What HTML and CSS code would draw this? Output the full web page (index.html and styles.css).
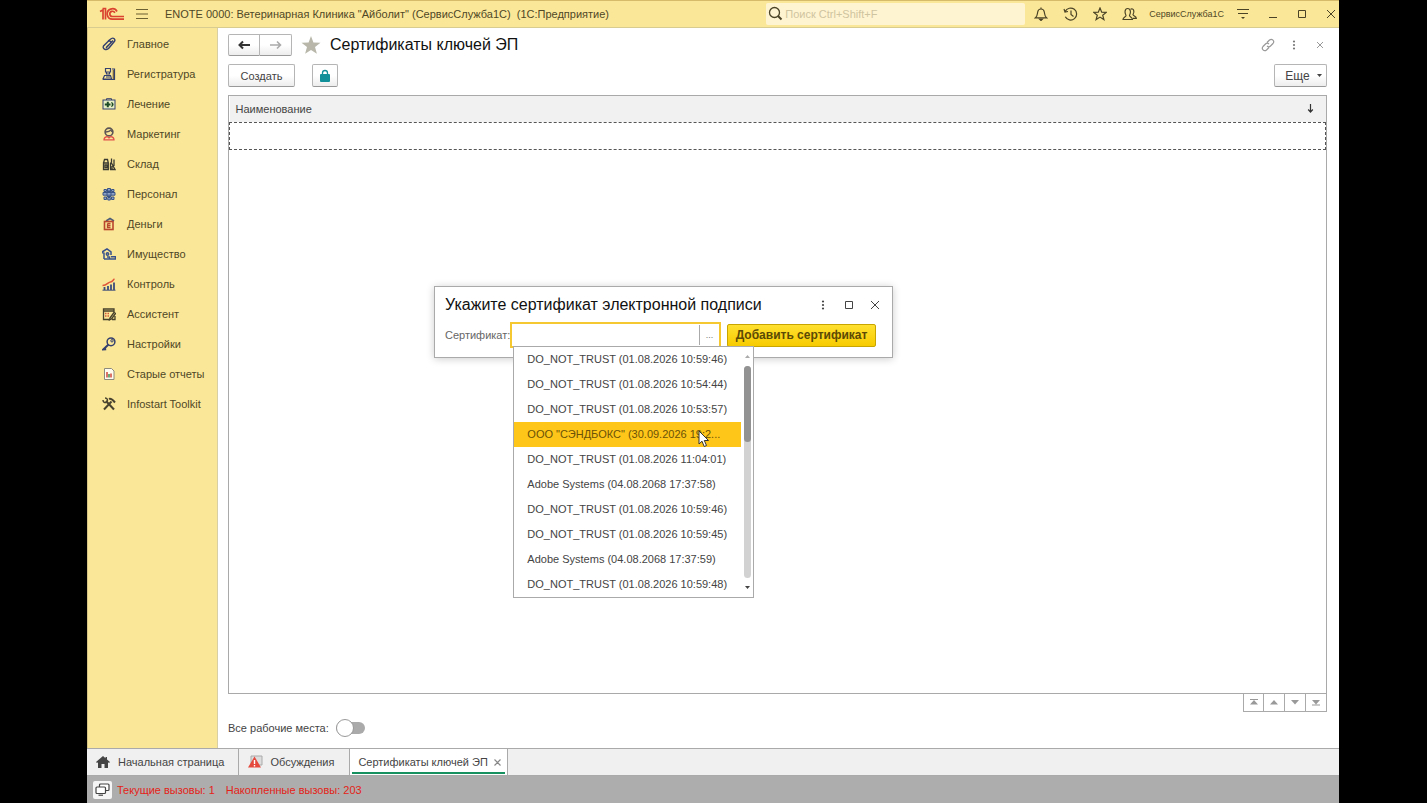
FILE: index.html
```html
<!DOCTYPE html>
<html lang="ru">
<head>
<meta charset="utf-8">
<title>Сертификаты ключей ЭП</title>
<link rel="stylesheet" href="styles.css">
</head>
<body>
<div class="app">
  <header class="titlebar">
    <svg class="logo" width="26" height="14" viewBox="0 0 26 14" fill="none" stroke="#d9432f" stroke-width="1.700"><path d="M1 4.500 4 3V12.500M3.500 1.500H6.500V12.500"/><path d="M18 4.500A5.200 5.200 0 1 0 13.500 12.200H25"/><path d="M15.800 5.800A2.600 2.600 0 1 0 13.500 9.500H25"/></svg>
    <button class="icon-btn menu-btn" aria-label="Меню"><svg width="14" height="12" viewBox="0 0 14 12" stroke="#6b6132" stroke-width="1.200"><path d="M1 1.500H13M1 6H13M1 10.500H13"/></svg></button>
    <span class="app-title">ENOTE 0000: Ветеринарная Клиника "Айболит" (СервисСлужба1С)&nbsp; (1С:Предприятие)</span>
    <label class="search">
      <svg width="15" height="15" viewBox="0 0 15 15" fill="none" stroke="#4a4326" stroke-width="1.300"><circle cx="6.500" cy="6.500" r="5"/><path d="m10 10 3.500 3.500" stroke-width="2"/></svg>
      <input type="search" placeholder="Поиск Ctrl+Shift+F" aria-label="Поиск">
    </label>
    <div class="tools">
      <button class="icon-btn" aria-label="Уведомления"><svg width="14" height="14" viewBox="0 0 14 14" fill="none" stroke="#4a4326" stroke-width="1.200"><path d="M1.500 10.800C3.500 9 3.300 7 3.700 5 4 3 5.500 2 7 2S10 3 10.300 5C10.700 7 10.500 9 12.500 10.800ZM7 .5V2"/><path d="M5.500 12h3L7 13.500Z" fill="#4a4326"/></svg></button>
      <button class="icon-btn" aria-label="История"><svg width="15" height="14" viewBox="0 0 15 14" fill="none" stroke="#4a4326" stroke-width="1.200"><path d="M2.200 4.500A6 6 0 1 1 2.300 9.800M1 2l1 3 3-.5M8 3.500V7.500L10.500 9.500"/></svg></button>
      <button class="icon-btn" aria-label="Избранное"><svg width="14" height="14" viewBox="0 0 14 14" fill="none" stroke="#4a4326" stroke-width="1.200"><path d="m7 1 1.700 4.200 4.500.2-3.500 2.800 1.200 4.400L7 10.100 3.100 12.600l1.200-4.400L.8 5.400l4.500-.2Z"/></svg></button>
      <button class="icon-btn" aria-label="Пользователи"><svg width="15" height="14" viewBox="0 0 15 14" fill="none" stroke="#4a4326" stroke-width="1.200"><path d="M1 12.500C1 10 4 10 4 8.500 2.500 6 2.500 1.500 5.700 1.500S9 6 7.500 8.500C7.500 10 10.500 10 10.500 12.500Z"/><path d="M8.500 2.200C11.500 .8 13 4.500 11 7.500 11 9 14.300 9 14.300 11.300H11"/></svg></button>
      <span class="user">СервисСлужба1С</span>
      <button class="icon-btn" aria-label="Настройка"><svg width="14" height="13" viewBox="0 0 14 13" fill="none" stroke="#4a4326" stroke-width="1.200"><path d="M1 2.500H13M2 6.500H12"/><path d="M5 10h4l-2 2Z" fill="#4a4326" stroke="none"/></svg></button>
      <div class="window-btns">
        <button class="icon-btn" aria-label="Свернуть"><svg width="10" height="10" viewBox="0 0 10 10" stroke="#4a4326"><path d="M1 8.500H9"/></svg></button>
        <button class="icon-btn" aria-label="Развернуть"><svg width="10" height="10" viewBox="0 0 10 10" fill="none" stroke="#4a4326"><path d="M1.500 1.500h7v7h-7Z"/></svg></button>
        <button class="icon-btn" aria-label="Закрыть"><svg width="10" height="10" viewBox="0 0 10 10" stroke="#4a4326"><path d="M1 1 9 9M9 1 1 9"/></svg></button>
      </div>
    </div>
  </header>

  <div class="body">
    <nav class="sidebar">
      <a href="#"><svg width="14" height="14" viewBox="0 0 14 14" fill="none" stroke="#34406e" stroke-width="1.400"><path d="M6 4 9.500 1.500c2-1.200 4.200 1 3 2.800L7 11c-2.500 3-7 1-5.500-2L6 4.500c2-1.500 3.500.5 2.500 1.800L4.500 10M4 11 11 3.500"/></svg>Главное</a>
      <a href="#"><svg width="14" height="14" viewBox="0 0 14 14" fill="none" stroke="#34406e" stroke-width="1.200"><path d="M3.500 1.500h5v3.500h-5ZM4.500 5v2h3V5M2.500 8.500h6L9.500 12H1ZM4 10h4M10 2h2.500v10.500H1"/><path d="M11.300 3v9" stroke="#6b5a3a"/></svg>Регистратура</a>
      <a href="#"><svg width="14" height="14" viewBox="0 0 14 14"><path d="M4.500 3V1.700h5V3" fill="none" stroke="#34406e"/><rect x="1" y="3" width="12" height="9" fill="#e9efc4" stroke="#34406e"/><path d="M2.800 6.500h2V4.800h2v1.700h1.700v2H6.800v1.700h-2V8.500h-2ZM9 5c3.500.5 3.500 4.500 0 5 1-1.500 1-3.500 0-5Z" fill="#1d4b25"/></svg>Лечение</a>
      <a href="#"><svg width="14" height="14" viewBox="0 0 14 14" fill="none" stroke-width="1.300"><circle cx="7" cy="5" r="3.900" stroke="#5b5555" stroke-width="1.600"/><path d="M4 5c2-.2 4-1 5-2l1 2" stroke="#5b5555"/><path d="M2 12.800C2 10 4 9.800 5.200 9.500L7 11l1.800-1.500c1.200.3 3.200.5 3.200 3.300Z" stroke="#e0534b"/></svg>Маркетинг</a>
      <a href="#"><svg width="14" height="14" viewBox="0 0 14 14" fill="none" stroke="#3a3a30" stroke-width="1.300"><path d="M1.500 6h4.800v6.500H1.500ZM1.500 6l1-3.500h3l.8 3.500M3 8h2v2.500H3ZM8.500 12.500V6.500l1-1.500V1.500M9.500 6l3.500 6.500H8M12 2.500V9M10 9v3"/></svg>Склад</a>
      <a href="#"><svg width="14" height="14" viewBox="0 0 14 14" fill="#8fa5c8" stroke="#3a5486"><path d="M5.500 1.500h3v2.500h-3ZM2 2.500h2.500v2H2ZM9.500 2.500H12v2H9.500ZM1 5.500h12v2.700H1ZM5 4.500h4v5H5ZM2 10h2.500v2.500H2ZM5.800 10.500h2.500V13H5.800ZM9.500 10H12v2.500H9.500Z"/></svg>Персонал</a>
      <a href="#"><svg width="14" height="14" viewBox="0 0 14 14" fill="none"><path d="m4 4 4-2.500L12 4" stroke="#4d5c77" stroke-width="1.500"/><rect x="2.500" y="4.500" width="8.500" height="8" stroke="#b8452d" stroke-width="1.600"/><path d="M5.500 6.500v4h3M5.500 8.500h3M5.500 6.500h3" stroke="#b8452d" stroke-width="1.300"/></svg>Деньги</a>
      <a href="#"><svg width="14" height="14" viewBox="0 0 14 14" fill="none" stroke="#39518a" stroke-width="1.500"><path d="M.8 6.500V4.500L5 1.800l4 3V8M2 5.500V12M2 12h11.500V9.800H9"/><circle cx="5.500" cy="7" r="1.200"/><path d="M5 10h2.500V12"/></svg>Имущество</a>
      <a href="#"><svg width="14" height="14" viewBox="0 0 14 14" fill="none"><path d="M2.500 13V10M6 13V9M9 13V7.500M12 13V5.500" stroke="#3d4d7c" stroke-width="1.800"/><path d="M.5 8.500C5 8.500 6 5 8.500 5S11 2.500 12.500 2" stroke="#e0563a" stroke-width="1.500"/><path d="M.5 13.200h13" stroke="#3d4d7c"/></svg>Контроль</a>
      <a href="#"><svg width="14" height="14" viewBox="0 0 14 14" fill="none" stroke="#45402b" stroke-width="1.300"><path d="M12 5V2H1.500v10.500H8M1.500 4H12"/><path d="M3 6.500h1.500M5.500 6.500H7M3 9h1.500M5.500 9H7" stroke="#d45a3a"/><path d="m8 11 4-5.500 1.500 1L9.500 12 7.500 12.800ZM10 12.500h3V9"/></svg>Ассистент</a>
      <a href="#"><svg width="14" height="14" viewBox="0 0 14 14" fill="none" stroke="#34406e"><path d="M6.500 7.500 1.200 12.500l3-.3" stroke-width="2"/><circle cx="9" cy="4.800" r="3.900" stroke-width="1.500"/><circle cx="10" cy="3.800" r="1.200"/></svg>Настройки</a>
      <a href="#"><svg width="14" height="14" viewBox="0 0 14 14"><path d="M2.500 1.500h7l2.500 2.500v8.500H2.500Z" fill="#fffdf0" stroke="#8b8a7c"/><path d="M5 5v5.500" stroke="#d0453a" stroke-width="1.500"/><path d="M7 7v3.500" stroke="#3a8c4e" stroke-width="1.500"/><path d="M9 6.500v4" stroke="#d0453a" stroke-width="1.500"/></svg>Старые отчеты</a>
      <a href="#"><svg width="14" height="14" viewBox="0 0 14 14" fill="none" stroke="#48432f"><path d="m4 4 8 8.500" stroke-width="2"/><path d="M1 3c0 2.500 2 3 3.500 2.300M3 1c2.500 0 3 2 2 3.500" stroke-width="1.500"/><path d="m2 12.500 7.500-8" stroke-width="2"/><path d="M7 2c2-1 3.500.5 6 3.500" stroke-width="2"/></svg>Infostart Toolkit</a>
    </nav>

    <main class="workspace">
      <div class="page-head">
        <div class="nav-btns">
          <button class="btn" aria-label="Назад"><svg width="14" height="10" viewBox="0 0 14 10" fill="none" stroke="#333" stroke-width="2"><path d="M13 5H3M6 1.500 2.500 5 6 8.500"/></svg></button>
          <button class="btn" aria-label="Вперед"><svg width="14" height="10" viewBox="0 0 14 10" fill="none" stroke="#aaa" stroke-width="1.600"><path d="M1 5h10.500M8 1.500 11.500 5 8 8.500"/></svg></button>
        </div>
        <svg class="star" width="20" height="18" viewBox="0 0 20 18" fill="#b8b7aa"><path d="m10 0 2.400 6.400 7.100.3-5.500 4.300 1.900 6.800L10 13.900 4.100 17.800 6 11 .5 6.700l7.100-.3Z"/></svg>
        <h1>Сертификаты ключей ЭП</h1>
        <div class="page-tools">
          <button class="icon-btn" aria-label="Ссылка"><svg width="14" height="14" viewBox="0 0 14 14" fill="none" stroke="#999" stroke-width="1.200"><path d="M6 4.500 8.500 2C11 0 14 3 12 5.500L9.500 8C8.500 9 7 8.800 6 8M8 9.500 5.500 12C3 14 0 11 2 8.500L4.500 6C5.500 5 7 5.200 8 6"/></svg></button>
          <button class="icon-btn" aria-label="Действия"><svg width="4" height="10" viewBox="0 0 4 10" fill="#777"><circle cx="2" cy="1.500" r="1.100"/><circle cx="2" cy="5" r="1.100"/><circle cx="2" cy="8.500" r="1.100"/></svg></button>
          <button class="icon-btn" aria-label="Закрыть страницу"><svg width="6" height="6" viewBox="0 0 6 6" stroke="#999"><path d="m0 0 6 6M6 0 0 6"/></svg></button>
        </div>
      </div>

      <div class="commands">
        <button class="btn create">Создать</button>
        <button class="btn lock" aria-label="Подпись"><svg width="12" height="14" viewBox="0 0 12 14"><path d="M3.500 6V4a2.500 2.500 0 0 1 5 0v2" fill="none" stroke="#119099" stroke-width="1.300"/><rect x="1" y="5" width="10" height="8" rx="1" fill="#119099"/></svg></button>
        <button class="btn more">Еще<svg width="5" height="3" viewBox="0 0 5 3" fill="#444"><path d="M0 0h5L2.500 3Z"/></svg></button>
      </div>

      <div class="list">
        <table>
          <thead><tr><th><div class="th-in">Наименование<svg width="7" height="9" viewBox="0 0 7 9" fill="none" stroke="#333" stroke-width="1.200"><path d="M3.500 0v8M1.200 5.500 3.500 8l2.300-2.500"/></svg></div></th></tr></thead>
          <tbody><tr><td></td></tr></tbody>
        </table>
      </div>
      <div class="pager">
        <button aria-label="В начало"><svg width="10" height="7" viewBox="0 0 10 7" fill="#999"><path d="M1 0h8v1H1ZM5 1l4 4.500H1Z"/></svg></button>
        <button aria-label="Вверх"><svg width="10" height="7" viewBox="0 0 10 7" fill="#999"><path d="m5 1 4 4.500H1Z"/></svg></button>
        <button aria-label="Вниз"><svg width="10" height="7" viewBox="0 0 10 7" fill="#999"><path d="M1 1h8L5 5.500Z"/></svg></button>
        <button aria-label="В конец"><svg width="10" height="7" viewBox="0 0 10 7" fill="#999"><path d="M1 1h8L5 5.500ZM1 5.500h8v1H1Z"/></svg></button>
      </div>
      <div class="switch-row">
        <label for="all">Все рабочие места:</label>
        <input type="checkbox" id="all" class="switch">
      </div>

      <section class="dialog" role="dialog" aria-labelledby="dlg-title">
        <div class="dialog-head">
          <h2 id="dlg-title">Укажите сертификат электронной подписи</h2>
          <div class="dialog-tools">
            <button class="icon-btn" aria-label="Еще"><svg width="4" height="10" viewBox="0 0 4 10" fill="#444"><circle cx="2" cy="1.500" r="1.100"/><circle cx="2" cy="5" r="1.100"/><circle cx="2" cy="8.500" r="1.100"/></svg></button>
            <button class="icon-btn" aria-label="Развернуть окно"><svg width="10" height="10" viewBox="0 0 10 10" fill="none" stroke="#444"><path d="M1.500 1.500h7v7h-7Z"/></svg></button>
            <button class="icon-btn" aria-label="Закрыть окно"><svg width="10" height="10" viewBox="0 0 10 10" stroke="#444"><path d="M1 1 9 9M9 1 1 9"/></svg></button>
          </div>
        </div>
        <div class="dialog-form">
          <label for="cert">Сертификат:</label>
          <div class="combo">
            <input id="cert" type="text">
            <button class="pick" aria-label="Выбрать">...</button>
            <div class="dropdown">
              <ul>
                <li>DO_NOT_TRUST (01.08.2026 10:59:46)</li>
                <li>DO_NOT_TRUST (01.08.2026 10:54:44)</li>
                <li>DO_NOT_TRUST (01.08.2026 10:53:57)</li>
                <li class="active">ООО "СЭНДБОКС" (30.09.2026 19:2...</li>
                <li>DO_NOT_TRUST (01.08.2026 11:04:01)</li>
                <li>Adobe Systems (04.08.2068 17:37:58)</li>
                <li>DO_NOT_TRUST (01.08.2026 10:59:46)</li>
                <li>DO_NOT_TRUST (01.08.2026 10:59:45)</li>
                <li>Adobe Systems (04.08.2068 17:37:59)</li>
                <li>DO_NOT_TRUST (01.08.2026 10:59:48)</li>
              </ul>
              <div class="scroll">
                <svg width="5" height="3" viewBox="0 0 5 3" fill="#aaa"><path d="M0 3h5L2.500 0Z"/></svg>
                <div class="track"><div class="thumb"></div></div>
                <svg width="5" height="3" viewBox="0 0 5 3" fill="#444"><path d="M0 0h5L2.500 3Z"/></svg>
              </div>
              <svg class="cursor" width="12" height="18" viewBox="0 0 12 18" fill="#fff" stroke="#333"><path d="M1 1v13l3-2.800 2.200 5.300 2.300-1-2.200-5H10.500Z"/></svg>
            </div>
          </div>
          <button class="primary">Добавить сертификат</button>
        </div>
      </section>
    </main>
  </div>

  <div class="tabs">
    <a class="tab home" href="#"><svg width="14" height="12" viewBox="0 0 14 12" fill="#444"><path d="M7 0 0 6l1 1 1-.8V12h3.500V8h3v4H12V6.200l1 .8 1-1-3-2.600V1H9.500v1.200Z"/></svg>Начальная страница</a>
    <a class="tab talk" href="#"><svg width="15" height="14" viewBox="0 0 15 14"><path d="M3 1h11v9H3Z" fill="#ddd" stroke="#aaa"/><path d="M6.500 1.500 13 12.500H0Z" fill="#e5483d"/><path d="M6.500 5v4M6.500 10v1.500" stroke="#fff" stroke-width="1.400"/></svg>Обсуждения</a>
    <a class="tab current" href="#">Сертификаты ключей ЭП<svg width="7" height="7" viewBox="0 0 7 7" stroke="#888" stroke-width="1.200"><path d="m.5.5 6 6M6.500.5l-6 6"/></svg></a>
  </div>
  <footer class="status">
    <button class="status-btn" aria-label="Вызовы"><svg width="15" height="13" viewBox="0 0 15 13" fill="#fff" stroke="#444" stroke-width="1.200"><rect x="4.500" y="1" width="9.500" height="6.500" rx="1"/><rect x="1" y="4" width="9.500" height="6.500" rx="1"/><path d="M3.500 12.200h4.500"/></svg></button>
    <span>Текущие вызовы: 1</span><span>Накопленные вызовы: 203</span>
  </footer>
</div>
</body>
</html>
```
FILE: styles.css
```css
* { box-sizing: border-box; }
body {
  margin: 0;
  background: #000;
  font: 11px/16px "Liberation Sans", Arial, sans-serif;
  color: #444;
}
button, input { font: inherit; color: inherit; }
a { color: inherit; text-decoration: none; }
svg { flex: none; display: block; }
h1, h2 { margin: 0; font-weight: 400; color: #111; }

.app {
  display: flex;
  flex-direction: column;
  min-height: 100vh;
  margin: 0 88px 0 87px;
  background: #fff;
}
.icon-btn {
  display: flex;
  align-items: center;
  justify-content: center;
  padding: 0;
  border: 0;
  background: none;
}

.titlebar {
  display: flex;
  align-items: center;
  height: 28px;
  padding: 0 3px 1px 12px;
  background: #fbe798;
  border-top: 1px solid #d6bc6a;
  border-bottom: 1px solid #d9cc90;
  color: #4f4726;
}
.menu-btn { margin: 0 16px 0 10px; }
.app-title { flex: 1; white-space: nowrap; }
.search {
  display: flex;
  align-items: center;
  gap: 2px;
  width: 259px;
  height: 22px;
  padding-left: 2px;
  background: #fff4d1;
  border-radius: 2px;
}
.search input {
  flex: 1;
  min-width: 0;
  padding: 0;
  border: 0;
  outline: 0;
  background: none;
}
.search input::placeholder { color: #cfc4a0; opacity: 1; }
.tools { display: flex; align-items: center; gap: 15px; margin-left: 9px; }
.user { font-size: 9px; margin: 0 -3px; }
.window-btns { display: flex; gap: 19px; margin-left: 3px; }

.body { flex: 1; display: flex; }
.sidebar {
  width: 131px;
  padding-top: 1px;
  background: #fbe798;
  border-left: 1px solid #d6c584;
  border-right: 1px solid #d9cfa4;
}
.sidebar a {
  display: flex;
  align-items: center;
  gap: 11px;
  height: 30px;
  padding-left: 14px;
  color: #4f4726;
  white-space: nowrap;
}

.workspace {
  position: relative;
  flex: 1;
  display: flex;
  flex-direction: column;
  padding: 6px 12px 12px 10px;
}
.btn {
  display: flex;
  align-items: center;
  justify-content: center;
  height: 23px;
  padding: 0;
  border: 1px solid #b5b5b5;
  border-bottom-color: #999;
  border-radius: 2px;
  background: linear-gradient(#fff 50%, #ededed);
}
.page-head { display: flex; align-items: center; height: 22px; }
.nav-btns { display: flex; }
.nav-btns .btn { width: 32px; height: 22px; border-radius: 2px 0 0 2px; }
.nav-btns .btn + .btn { border-left: 0; border-radius: 0 2px 2px 0; }
.star { margin: 0 9px; }
.page-head h1 { flex: 1; font-size: 16px; line-height: 22px; }
.page-tools { display: flex; margin-right: -6px; }
.page-tools .icon-btn, .dialog-tools .icon-btn { width: 26px; }
.commands { display: flex; margin: 8px 0; }
.create { width: 67px; }
.lock { width: 26px; margin-left: 17px; }
.more { width: 53px; gap: 7px; margin-left: auto; padding-left: 6px; font-size: 12px; }

.list { flex: 1; border: 1px solid #a9a9a9; }
.list table { width: 100%; border-collapse: collapse; }
.list th {
  height: 26px;
  padding: 0 12px 0 6px;
  background: #f1f1f1;
  font-weight: 400;
  text-align: left;
}
.th-in { display: flex; align-items: center; justify-content: space-between; }
.list td { height: 27px; padding: 0; border: 1px dashed #555; }
.pager { display: flex; justify-content: flex-end; }
.pager button {
  display: flex;
  align-items: center;
  justify-content: center;
  width: 21px;
  height: 18px;
  padding: 0;
  border: 1px solid #aaa;
  border-width: 0 1px 1px 0;
  background: #fff;
}
.pager button:first-child { border-left-width: 1px; }
.switch-row { display: flex; align-items: center; gap: 7px; margin-top: 8px; }
.switch {
  appearance: none;
  display: flex;
  align-items: center;
  width: 29px;
  height: 12px;
  margin: 0;
  border-radius: 6px;
  background: #aaa;
}
.switch::before {
  content: "";
  flex: none;
  width: 16px;
  height: 16px;
  border: 1px solid #999;
  border-radius: 50%;
  background: #fff;
}

.dialog {
  position: absolute;
  top: 258px;
  left: 216px;
  width: 459px;
  padding: 7px 16px 9px 10px;
  background: #fff;
  border: 1px solid #aaa;
  box-shadow: 0 1px 8px rgba(0, 0, 0, .2);
}
.dialog-head { display: flex; align-items: center; justify-content: space-between; }
.dialog h2 { font-size: 16px; line-height: 22px; }
.dialog-tools { display: flex; margin-right: -12px; }
.dialog-form { display: flex; align-items: center; margin-top: 6px; }
.dialog-form > label { color: #666; white-space: nowrap; }
.combo {
  position: relative;
  display: flex;
  flex: 1;
  height: 26px;
  margin: 0 6px 0 0;
  border: 2px solid #f5c832;
}
.combo input { flex: 1; min-width: 0; padding: 0 4px; border: 0; outline: 0; }
.pick {
  width: 20px;
  margin: 1px 0;
  padding: 0;
  border: 0;
  border-left: 1px solid #aaa;
  background: none;
  font-size: 9px;
  color: #777;
}
.primary {
  width: 149px;
  height: 23px;
  padding: 0;
  border: 1px solid #c9a500;
  border-radius: 2px;
  background: linear-gradient(#ffe030, #f7cb00);
  color: #5b4a05;
  font-size: 12px;
  font-weight: 700;
}
.dropdown {
  position: absolute;
  top: 22px;
  left: 1px;
  z-index: 2;
  display: flex;
  width: 241px;
  background: #fff;
  border: 1px solid #aaa;
}
.dropdown ul { flex: 1; margin: 0; padding: 0; list-style: none; }
.dropdown li { padding-left: 13px; line-height: 25px; white-space: nowrap; }
.dropdown .active { background: #fec619; color: #6b5208; }
.scroll {
  display: flex;
  flex-direction: column;
  align-items: center;
  gap: 8px;
  width: 12px;
  padding: 8px 0;
}
.track { flex: 1; width: 7px; border-radius: 4px; background: #d2d2d2; }
.thumb { height: 36%; border-radius: 4px; background: #929292; }
.cursor { position: absolute; top: 83px; left: 184px; }

.tabs {
  display: flex;
  height: 28px;
  border: 1px solid #aaa;
  border-width: 1px 0;
  background: #f0f0f0;
}
.tab {
  display: flex;
  align-items: center;
  border-right: 1px solid #aaa;
  white-space: nowrap;
}
.home { gap: 8px; padding: 0 14px 0 9px; }
.talk { gap: 7px; padding: 0 15px 0 9px; }
.current { gap: 6px; padding: 0 6px 0 8px; background: linear-gradient(#16905f, #16905f) 2px calc(100% - 1px) / calc(100% - 4px) 2px no-repeat #fff; }
.status {
  display: flex;
  align-items: center;
  gap: 11px;
  height: 27px;
  padding-left: 6px;
  background: #adadad;
  color: #e42318;
}
.status-btn {
  display: flex;
  align-items: center;
  justify-content: center;
  width: 19px;
  height: 18px;
  margin-right: -6px;
  padding: 0;
  border: 0;
  border-radius: 2px;
  background: #f5f5f5;
}
```
